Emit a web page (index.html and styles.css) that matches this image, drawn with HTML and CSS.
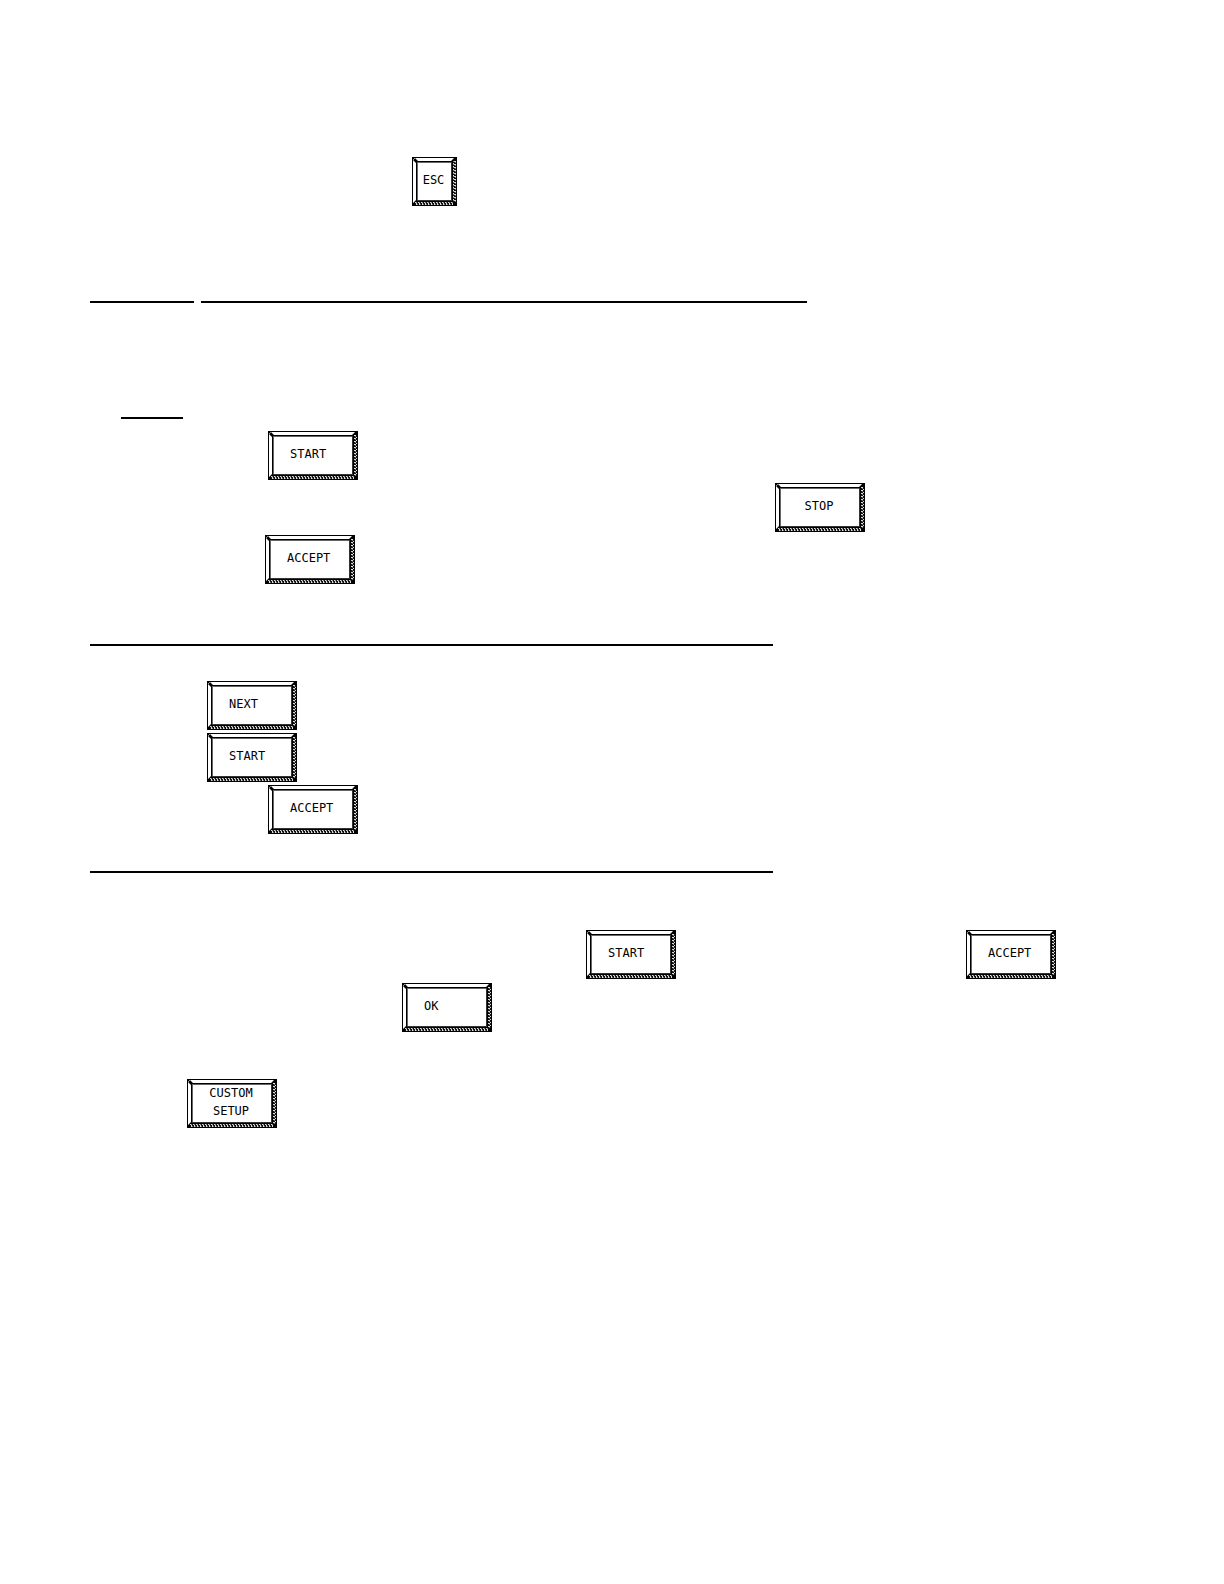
FILE: index.html
```
<!DOCTYPE html>
<html lang="en">
<head>
    <meta charset="UTF-8">
    <meta name="viewport" content="width=device-width, initial-scale=1.0">
    <title>Setup Keys</title>
    <link rel="stylesheet" href="styles.css">
</head>
<body>
    <!-- key frames, shared by all the buttons -->
    <svg class="defs" width="0" height="0" aria-hidden="true">
        <defs>
            <pattern id="dots-down" width="4" height="3" patternUnits="userSpaceOnUse">
                <rect width="4" height="3" fill="#111"/>
                <path d="M0 0H2V1H0ZM2 1H4V2H2Z" fill="#ddd"/>
                <path d="M1 1H2V2H1ZM3 2H4V3H3Z" fill="#777"/>
            </pattern>
            <pattern id="dots-across" width="3" height="4" patternUnits="userSpaceOnUse">
                <rect width="3" height="4" fill="#111"/>
                <path d="M0 0H1V2H0ZM1 2H2V4H1Z" fill="#ddd"/>
                <path d="M1 1H2V2H1ZM2 3H3V4H2Z" fill="#777"/>
            </pattern>
            <symbol id="key-wide" viewBox="0 0 90 49">
                <rect width="90" height="49" fill="#000"/>
                <path d="M3 1H87L84 4H6ZM1 3L4 6V43L1 46Z" fill="#fff"/>
                <path d="M1 2H2V3H1ZM2 1H3V2H2Z" fill="#999"/>
                <path d="M86 4H89V45H86Z" fill="url(#dots-down)"/>
                <path d="M3 45H86V48H3Z" fill="url(#dots-across)"/>
                <path d="M5 5H84V43H5Z" fill="#fff"/>
                <path d="M5 5.5H84M5.5 5V43" stroke="#666" fill="none"/>
                <path d="M84.5 5V43M5 43.5H85" stroke="#333" fill="none"/>
            </symbol>
            <symbol id="key-small" viewBox="0 0 45 49">
                <rect width="45" height="49" fill="#000"/>
                <path d="M3 1H42L39 4H6ZM1 3L4 6V43L1 46Z" fill="#fff"/>
                <path d="M1 2H2V3H1ZM2 1H3V2H2Z" fill="#999"/>
                <path d="M41 4H44V45H41Z" fill="url(#dots-down)"/>
                <path d="M3 45H41V48H3Z" fill="url(#dots-across)"/>
                <path d="M5 5H39V43H5Z" fill="#fff"/>
                <path d="M5 5.5H39M5.5 5V43" stroke="#666" fill="none"/>
                <path d="M39.5 5V43M5 43.5H40" stroke="#333" fill="none"/>
            </symbol>
        </defs>
    </svg>

    <main class="page">
        <div class="row escape">
            <button type="button" class="key small"><svg aria-hidden="true"><use href="#key-small"/></svg><span>ESC</span></button>
        </div>

        <div class="row heading">
            <hr class="rule number">
            <hr class="rule title">
        </div>

        <section class="steps first">
            <hr class="rule note">
            <div class="row start"><button type="button" class="key"><svg aria-hidden="true"><use href="#key-wide"/></svg><span>START</span></button></div>
            <div class="row stop"><button type="button" class="key center"><svg aria-hidden="true"><use href="#key-wide"/></svg><span>STOP</span></button></div>
            <div class="row accept"><button type="button" class="key"><svg aria-hidden="true"><use href="#key-wide"/></svg><span>ACCEPT</span></button></div>
        </section>

        <hr class="rule section-rule">

        <section class="steps second">
            <div class="row near"><button type="button" class="key"><svg aria-hidden="true"><use href="#key-wide"/></svg><span>NEXT</span></button></div>
            <div class="row near"><button type="button" class="key"><svg aria-hidden="true"><use href="#key-wide"/></svg><span>START</span></button></div>
            <div class="row start"><button type="button" class="key"><svg aria-hidden="true"><use href="#key-wide"/></svg><span>ACCEPT</span></button></div>
        </section>

        <hr class="rule section-rule">

        <section class="steps third">
            <div class="row pair">
                <button type="button" class="key"><svg aria-hidden="true"><use href="#key-wide"/></svg><span>START</span></button>
                <button type="button" class="key"><svg aria-hidden="true"><use href="#key-wide"/></svg><span>ACCEPT</span></button>
            </div>
            <div class="row ok"><button type="button" class="key"><svg aria-hidden="true"><use href="#key-wide"/></svg><span>OK</span></button></div>
        </section>

        <div class="row custom">
            <button type="button" class="key center"><svg aria-hidden="true"><use href="#key-wide"/></svg><span>CUSTOM<br>SETUP</span></button>
        </div>
    </main>
</body>
</html>
```
FILE: styles.css
```
body {
    font-family: "DejaVu Sans Mono", monospace;
    background-color: #fff;
    color: #000;
    margin: 0;
}
.defs {
    display: block;
}
.page {
    padding: 157px 90px 80px;
}
.row {
    display: flex;
}

/* Rules */
.rule {
    height: 2px;
    margin: 0;
    border: none;
    background-color: #000;
}
.heading {
    gap: 7px;
    margin-top: 95px;
}
.number {
    width: 104px;
}
.title {
    width: 606px;
}
.note {
    width: 62px;
    margin: 0 0 9px 31px;
}
.section-rule {
    max-width: 683px;
}

/* Keys */
.key {
    display: grid;
    align-items: center;
    width: 90px;
    height: 49px;
    padding: 0;
    border: none;
    background: none;
    font-family: inherit;
    font-size: 12px;
    line-height: 18px;
    color: #000;
    text-align: left;
    cursor: pointer;
}
.key svg,
.key span {
    grid-area: 1 / 1;
}
.key svg {
    display: block;
    width: 100%;
    height: 49px;
}
.key span {
    padding: 0 0 4px 22px;
}
.key.small {
    width: 45px;
}
.key.small span,
.key.center span {
    padding-left: 0;
    padding-right: 2px;
    text-align: center;
}

/* Step groups */
.steps {
    display: grid;
    gap: 3px;
}
.first {
    margin: 114px 0 60px;
}
.second {
    margin: 35px 0 37px;
}
.third {
    gap: 4px;
    margin: 57px 0 47px;
}
.escape {
    padding-left: 322px;
}
.start {
    padding-left: 178px;
}
.stop {
    padding-left: 685px;
}
.accept {
    padding-left: 175px;
}
.near {
    padding-left: 117px;
}
.pair {
    gap: 290px;
    padding-left: 496px;
}
.ok {
    padding-left: 312px;
}
.custom {
    padding-left: 97px;
}
```
